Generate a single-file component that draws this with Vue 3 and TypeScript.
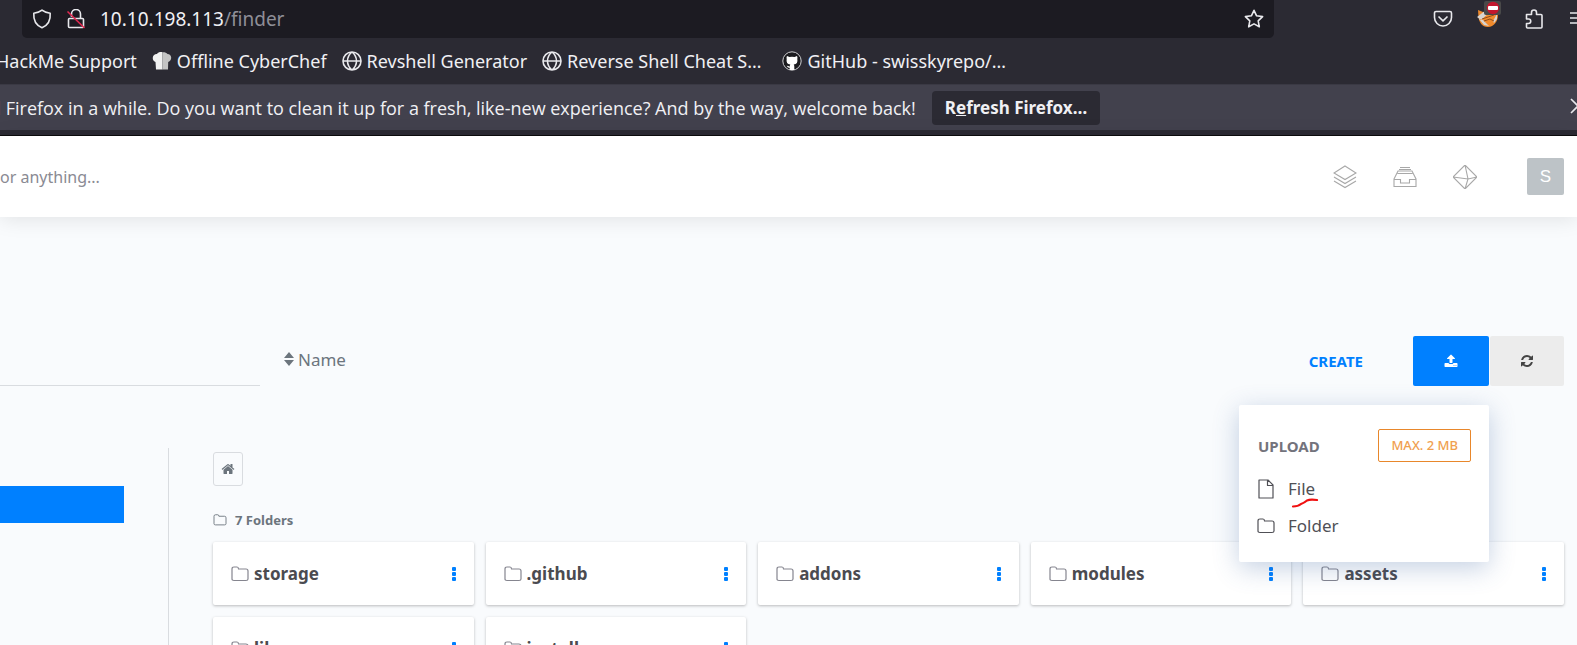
<script setup lang="ts">
interface Bookmark {
  label: string
  icon: 'none' | 'chef' | 'globe' | 'github'
}

const bookmarks: Bookmark[] = [
  { label: 'HackMe Support', icon: 'none' },
  { label: 'Offline CyberChef', icon: 'chef' },
  { label: 'Revshell Generator', icon: 'globe' },
  { label: 'Reverse Shell Cheat S…', icon: 'globe' },
  { label: 'GitHub - swisskyrepo/…', icon: 'github' },
]

const folders: string[] = ['storage', '.github', 'addons', 'modules', 'assets', 'lib', 'install']
</script>

<template>
  <div class="window">
    <div class="toolbar">
      <div class="urlbar">
        <svg class="i20" viewBox="0 0 20 20"><path class="line" d="M10 1.200c2.200 1.800 4.800 2.600 8.200 3.100.5 6.700-2.700 12.200-8.200 14.500C4.500 16.500 1.300 11 1.800 4.300 5.200 3.800 7.800 3 10 1.200z" /></svg>
        <svg class="i20" viewBox="0 0 20 20">
          <path class="line" d="M5.500 8V5a4.500 4.500 0 0 1 9 0v4M3.500 9.500h13a1 1 0 0 1 1 1v7a1 1 0 0 1-1 1h-13a1 1 0 0 1-1-1v-7a1 1 0 0 1 1-1z" />
          <path class="strike" d="M1.500 2.500l17 16.500" />
        </svg>
        <div class="address"><span>10.10.198.113</span><span class="path">/finder</span></div>
        <button class="bare" aria-label="Bookmark this page">
          <svg class="i20" viewBox="0 0 20 20"><path class="line" d="M10 1.300l2.600 5.500 6 .8-4.400 4.200 1.100 6-5.300-2.900-5.300 2.900 1.100-6L1.400 7.600l6-.8z" /></svg>
        </button>
      </div>
      <div class="tools">
        <button class="bare" aria-label="Save to Pocket">
          <svg class="i20" viewBox="0 0 20 20"><path class="line" d="M3 2.500h14a1.500 1.500 0 0 1 1.500 1.500v4.500a8.500 8.500 0 0 1-17 0V4A1.500 1.500 0 0 1 3 2.500zM5.500 7.500L10 11.800l4.500-4.300" /></svg>
        </button>
        <button class="bare" aria-label="FoxyProxy">
          <svg class="fox" viewBox="0 0 24 28">
            <path d="M1 10l5 2 12-1 3 4c0 6-4 12-10 12S2 22 1.500 17z" fill="#f08a2c" />
            <path d="M0 17l9-7 4 2-9 8zM2 19l5 6 5 1-7-7zM17 23l3-4v-5l-4 7z" fill="#d8d4d0" />
            <path d="M5 19l6-2 6-2M7 21l6-2 4 2" stroke="#8f4c1d" fill="none" />
            <rect x="7" y="1" width="17" height="14" rx="2" fill="#494949" />
            <circle cx="16" cy="8" r="6.200" fill="#c3162d" />
            <rect x="11" y="6" width="10" height="4" rx="1" fill="#fff" />
          </svg>
        </button>
        <button class="bare" aria-label="Extensions">
          <svg class="i20" viewBox="0 0 20 20"><path class="line" d="M1.500 5.500h5V3.500a2.500 2.500 0 0 1 5 0v2H16a1 1 0 0 1 1 1V18a1 1 0 0 1-1 1H2.500a1 1 0 0 1-1-1v-3.500h2a2.200 2.200 0 0 0 0-4.500h-2z" /></svg>
        </button>
        <button class="bare" aria-label="Menu">
          <svg class="i20" viewBox="0 0 20 20"><path class="line" d="M1 4h18M1 9h18M1 14h18" /></svg>
        </button>
      </div>
    </div>

    <nav class="bookmarks">
      <a v-for="b in bookmarks" :key="b.label" href="#" class="bookmark">
        <svg v-if="b.icon === 'chef'" class="i20" viewBox="0 0 20 20">
          <path d="M3.500 11C1.500 10.500.5 8.500.8 6.500 1 4 3 2.800 5 3 6 1.200 8.500.8 10.500 1.200v17.300H4z" fill="#f1f1f1" />
          <path d="M10.500 1.200c2-.2 4 .3 5 1.800 2 0 3.700 1.500 3.700 3.600 0 2-1 3.900-3 4.400l-.2 7.500h-5.500z" fill="#c4c4c4" />
        </svg>
        <svg v-if="b.icon === 'globe'" class="i20" viewBox="0 0 20 20"><path class="line" d="M10 1a9 9 0 1 0 0 18 9 9 0 0 0 0-18zM10 1C4 6 4 14 10 19M10 1c6 5 6 13 0 18M1 10h18" /></svg>
        <svg v-if="b.icon === 'github'" class="i20" viewBox="0 0 20 20">
          <circle cx="10" cy="10" r="9.200" fill="#1b1b1f" stroke="#cfcfd2" />
          <path d="M5 5l2.500 1q2.500-.6 5 0L15 5q.8 1.500.3 3 1 5-3.600 5.600.6.700.6 1.900V19H7.700v-2.300C5.500 17 5.500 15.500 4.500 14.800q2 0 3.200 1 0-1.500.6-2.200Q3.700 13 4.700 8 4.200 6.500 5 5z" fill="#fff" />
        </svg>
        <span>{{ b.label }}</span>
      </a>
    </nav>

    <div class="notice" role="status">
      <span class="notice-text">d Firefox in a while. Do you want to clean it up for a fresh, like-new experience? And by the way, welcome back!</span>
      <button class="refresh-ff">R<u>e</u>fresh Firefox…</button>
      <button class="bare close" aria-label="Close">
        <svg class="i20" viewBox="0 0 20 20"><path class="line" d="M3 1l14 14M17 1L3 15" /></svg>
      </button>
    </div>

    <header class="site-header">
      <input class="search" type="search" aria-label="Search" placeholder="or anything..." />
      <div class="header-icons">
        <a href="#" aria-label="Layers">
          <svg class="i24" viewBox="0 0 24 24"><path class="thin" d="M12 1l11 7-11 6.500L1 8zM1 12l11 6.500L23 12M1 16l11 6.500L23 16" /></svg>
        </a>
        <a href="#" aria-label="Inbox">
          <svg class="i24" viewBox="0 0 24 24"><path class="thin" d="M1 14L5 6h14l4 8v7.500H1zM1 14.500h6.500v3.500h9v-3.500H23M6 4.500h12M7 2.500h10M4.500 8.500h15" /></svg>
        </a>
        <a href="#" aria-label="Preview">
          <svg class="i24" viewBox="0 0 24 24"><path class="thin" d="M12 0l12 12-12 12L0 12zM0 12l15 2 9-2M12 0l3 14-3 10" /></svg>
        </a>
      </div>
      <a href="#" class="avatar">S</a>
    </header>

    <main>
      <div class="controls">
        <input class="filter" type="text" aria-label="Filter files" />
        <button class="bare sort">
          <svg viewBox="0 0 10 14"><path d="M5 0l5 6H0zM5 14l5-6H0z" fill="currentColor" /></svg>
          Name
        </button>
        <div class="actions">
          <button class="bare create">CREATE</button>
          <div class="upload-group">
            <button class="upload" aria-label="Upload">
              <svg viewBox="0 0 1792 1792"><path fill="currentColor" d="M1344 1472q0-26-19-45t-45-19-45 19-19 45 19 45 45 19 45-19 19-45zm256 0q0-26-19-45t-45-19-45 19-19 45 19 45 45 19 45-19 19-45zm128-224v320q0 40-28 68t-68 28h-1472q-40 0-68-28t-28-68v-320q0-40 28-68t68-28h427q21 56 70.500 92t110.500 36h256q61 0 110.500-36t70.500-92h427q40 0 68 28t28 68zm-325-648q-17 40-59 40h-256v448q0 26-19 45t-45 19h-256q-26 0-45-19t-19-45v-448h-256q-42 0-59-40-17-39 14-69l448-448q18-19 45-19t45 19l448 448q31 30 14 69z" /></svg>
            </button>
            <div class="menu">
              <div class="menu-head">
                <span>UPLOAD</span>
                <span class="limit">MAX. 2 MB</span>
              </div>
              <a href="#" class="menu-item">
                <svg viewBox="0 0 18 20"><path class="outline" d="M2 1h9l5 5v13H2zM10.500 1v5.500H16" /></svg>
                <span>File</span>
                <svg class="scribble" viewBox="0 0 28 10"><path d="M2 8.500q5 0 8-2.500 3-1 6-3.500 3-1.500 10-.5" /></svg>
              </a>
              <a href="#" class="menu-item">
                <svg viewBox="0 0 18 20"><path class="outline" d="M1 15V5q0-2 2-2h3q1.500 0 1.500 2H15q2 0 2 2v8q0 1.500-2 1.500H3q-2 0-2-1.500z" /></svg>
                <span>Folder</span>
              </a>
            </div>
          </div>
          <button class="reload" aria-label="Refresh">
            <svg viewBox="0 0 1792 1792"><path fill="currentColor" d="M1639 1056q0 5-1 7-64 268-268 434.500t-478 166.500q-146 0-282.500-55t-243.500-157l-129 129q-19 19-45 19t-45-19-19-45v-448q0-26 19-45t45-19h448q26 0 45 19t19 45-19 45l-137 137q71 66 161 102t187 36q134 0 250-65t186-179q11-17 53-117 8-23 30-23h192q13 0 22.500 9.500t9.500 22.500zm25-800v448q0 26-19 45t-45 19h-448q-26 0-45-19t-19-45 19-45l138-138q-148-137-349-137-134 0-250 65t-186 179q-11 17-53 117-8 23-30 23h-199q-13 0-22.500-9.500t-9.500-22.500v-7q65-268 270-434.500t480-166.500q146 0 284 55.500t245 156.500l130-129q19-19 45-19t45 19 19 45z" /></svg>
          </button>
        </div>
      </div>

      <div class="columns">
        <aside><a href="#" class="current" aria-label="Current folder"></a></aside>
        <section>
          <button class="home" aria-label="Home">
            <svg viewBox="0 0 1792 1792"><path fill="currentColor" d="M1472 992v480q0 26-19 45t-45 19h-384v-384h-256v384h-384q-26 0-45-19t-19-45v-480q0-1 .5-3t.5-3l575-474 575 474q1 2 1 6zm223-69l-62 74q-8 9-21 11h-3q-13 0-21-7l-692-577-692 577q-12 8-24 7-13-2-21-11l-62-74q-8-10-7-23.500t11-21.500l719-599q32-26 76-26t76 26l244 204v-195q0-14 9-23t23-9h192q14 0 23 9t9 23v408l219 182q10 8 11 21.500t-7 23.500z" /></svg>
          </button>
          <h2>
            <svg viewBox="0 0 18 16"><path class="outline" d="M1 13V3q0-2 2-2h3q1.500 0 1.500 2H15q2 0 2 2v8q0 1.500-2 1.500H3q-2 0-2-1.500z" /></svg>
            7 Folders
          </h2>
          <div class="grid">
            <article v-for="name in folders" :key="name" class="card">
              <a href="#">
                <svg viewBox="0 0 18 16"><path class="outline" d="M1 13V3q0-2 2-2h3q1.500 0 1.500 2H15q2 0 2 2v8q0 1.500-2 1.500H3q-2 0-2-1.500z" /></svg>
                {{ name }}
              </a>
              <button class="bare kebab" :aria-label="`Options for ${name}`"><i></i><i></i><i></i></button>
            </article>
          </div>
        </section>
      </div>
    </main>
  </div>
</template>

<style>
body {
  margin: 0;
}
</style>

<style scoped>
* {
  box-sizing: border-box;
}
.window {
  height: 100vh;
  overflow: hidden;
  display: flex;
  flex-direction: column;
  background: #f9fbfd;
  color: #6c757d;
  font-family: "Noto Sans", "Open Sans", sans-serif;
  font-size: 17px;
  white-space: nowrap;
}
button, input {
  font: inherit;
  color: inherit;
}
a {
  color: inherit;
  text-decoration: none;
}
svg {
  display: block;
  flex: none;
}
.bare {
  border: 0;
  padding: 0;
  background: none;
  flex: none;
}
.i20 {
  width: 20px;
  height: 20px;
}
.i24 {
  width: 24px;
  height: 24px;
}
.line {
  fill: none;
  stroke: #e8e8ec;
  stroke-width: 1.6;
  stroke-linejoin: round;
}
.strike {
  stroke: #e22850;
  stroke-width: 1.6;
}
.thin {
  fill: none;
  stroke: #a8a8a8;
  stroke-width: 1.1;
}
.outline {
  fill: none;
  stroke: currentColor;
  stroke-width: 1.2;
  stroke-linejoin: round;
}

.toolbar {
  flex: none;
  height: 38px;
  display: flex;
  background: #2b2a33;
  color: #f0f0f4;
}
.urlbar {
  flex: 1;
  margin-left: 22px;
  padding: 0 10px;
  display: flex;
  align-items: center;
  gap: 14px;
  background: #1c1b22;
  border-radius: 0 0 5px 5px;
}
.address {
  flex: 1;
  font-size: 19px;
  line-height: 24px;
}
.path {
  color: #8f8f98;
}
.tools {
  flex: none;
  display: flex;
  align-items: center;
  gap: 24px;
  margin: 0 -12px 0 159px;
}
.fox {
  width: 24px;
  height: 28px;
  margin-bottom: 10px;
}
.bookmarks {
  flex: none;
  height: 46px;
  display: flex;
  align-items: center;
  gap: 15px;
  background: #2b2a33;
  color: #f0f0f4;
  font-size: 18px;
}
.bookmark {
  display: flex;
  align-items: center;
  gap: 5px;
}
.bookmark:last-child {
  margin-left: 6px;
}
.bookmark:first-child {
  margin-left: -4px;
}
.notice {
  flex: none;
  height: 52px;
  padding-bottom: 6px;
  display: flex;
  align-items: center;
  background: linear-gradient(#42414d 45px, #2b2a33 45px, #2b2a33 50px, #0c0c0d 50px);
  border-top: 1px solid #3a3944;
  color: #f0f0f4;
}
.notice-text {
  margin-left: -10px;
  font-family: "Open Sans", "Noto Sans", sans-serif;
  font-size: 18px;
}
.refresh-ff {
  height: 34px;
  margin-left: 16px;
  padding: 0 13px;
  border: 0;
  border-radius: 4px;
  background: #2b2a33;
  font-weight: 700;
}
.close {
  margin: 0 -11px 0 auto;
}

.site-header {
  flex: none;
  height: 81px;
  padding-right: 13px;
  display: flex;
  align-items: center;
  background: #fff;
  box-shadow: 0 2px 20px rgba(0, 0, 0, 0.1);
}
.search {
  flex: 1;
  border: 0;
  padding: 0;
  outline: 0;
  background: none;
  font-size: 16px;
}
.search::placeholder {
  color: #8a8a93;
  opacity: 1;
}
.header-icons {
  display: flex;
  gap: 36px;
}
.avatar {
  width: 37px;
  height: 37px;
  margin-left: 50px;
  border-radius: 2px;
  background: #bdc3c7;
  color: #fff;
  font-family: "Liberation Sans", sans-serif;
  text-align: center;
  line-height: 38px;
}

main {
  flex: 1;
  padding-top: 119px;
  display: flex;
  flex-direction: column;
}
.controls {
  flex: none;
  height: 50px;
  padding-right: 13px;
  display: flex;
}
.filter {
  width: 260px;
  border: 0;
  border-bottom: 1px solid #d9dce0;
  background: none;
}
.sort {
  margin-left: 24px;
  padding-bottom: 4px;
  display: flex;
  align-items: center;
  gap: 4px;
}
.sort svg {
  width: 10px;
  height: 14px;
}
.actions {
  margin-left: auto;
  display: flex;
}
.create {
  margin-right: 50px;
  color: #0080ff;
  font-size: 15px;
  font-weight: 700;
}
.upload-group {
  position: relative;
  margin-right: 1px;
}
.upload, .reload {
  height: 50px;
  width: 76px;
  padding: 0;
  display: flex;
  align-items: center;
  justify-content: center;
  border: 0;
  border-radius: 2px;
  background: #0080ff;
  color: #fff;
}
.reload {
  width: 74px;
  background: #ececec;
  color: #444;
}
.upload svg, .reload svg, .home svg {
  width: 14px;
  height: 14px;
}
.menu {
  position: absolute;
  z-index: 2;
  top: 69px;
  right: 0;
  width: 250px;
  padding: 24px 18px 18px;
  border-radius: 2px;
  background: #fff;
  box-shadow: 0 6px 26px rgba(60, 100, 160, 0.3);
  color: #505056;
}
.menu-head {
  height: 33px;
  margin-bottom: 8px;
  padding-left: 1px;
  display: flex;
  align-items: center;
  justify-content: space-between;
  color: #73737c;
  font-size: 15px;
  font-weight: 700;
}
.limit {
  height: 33px;
  padding: 0 12px;
  border: 1px solid #e8872b;
  border-radius: 2px;
  color: #f0a050;
  font-size: 13px;
  font-weight: 500;
  line-height: 31px;
}
.menu-item {
  position: relative;
  height: 37px;
  display: flex;
  align-items: center;
  gap: 13px;
}
.menu-item svg {
  width: 18px;
  height: 20px;
}
.menu-item .scribble {
  position: absolute;
  left: 34px;
  top: 28px;
  width: 28px;
  height: 10px;
}
.scribble path {
  fill: none;
  stroke: #f01010;
  stroke-width: 2.2;
  stroke-linecap: round;
}
.columns {
  flex: 1;
  margin-top: 62px;
  display: flex;
}
aside {
  flex: none;
  width: 169px;
  padding-top: 38px;
  border-right: 1px solid #d9dce0;
}
.current {
  display: block;
  width: 124px;
  height: 37px;
  background: #0080ff;
}
section {
  flex: 1;
  padding: 4px 13px 0 44px;
}
.home {
  width: 30px;
  height: 34px;
  padding: 0;
  display: flex;
  align-items: center;
  justify-content: center;
  border: 1px solid #d9dce0;
  border-radius: 3px;
  background: none;
}
h2 {
  height: 20px;
  margin: 24px 0 12px;
  display: flex;
  align-items: center;
  gap: 8px;
  font-size: 13px;
}
h2 svg {
  width: 14px;
  height: 12px;
}
.grid {
  display: grid;
  grid-template-columns: repeat(5, 1fr);
  gap: 12px;
}
.card {
  height: 63px;
  padding: 0 18px;
  display: flex;
  align-items: center;
  justify-content: space-between;
  border-radius: 2px;
  background: #fff;
  box-shadow: 0 1px 3px rgba(0, 0, 0, 0.26);
}
.card a {
  display: flex;
  align-items: center;
  gap: 5px;
  color: #4b4b50;
  font-weight: 700;
}
.card svg {
  width: 18px;
  height: 16px;
  color: #85858f;
}
.kebab {
  display: grid;
  gap: 1px;
}
.kebab i {
  width: 4px;
  height: 4px;
  border-radius: 1px;
  background: #0080ff;
}
</style>
